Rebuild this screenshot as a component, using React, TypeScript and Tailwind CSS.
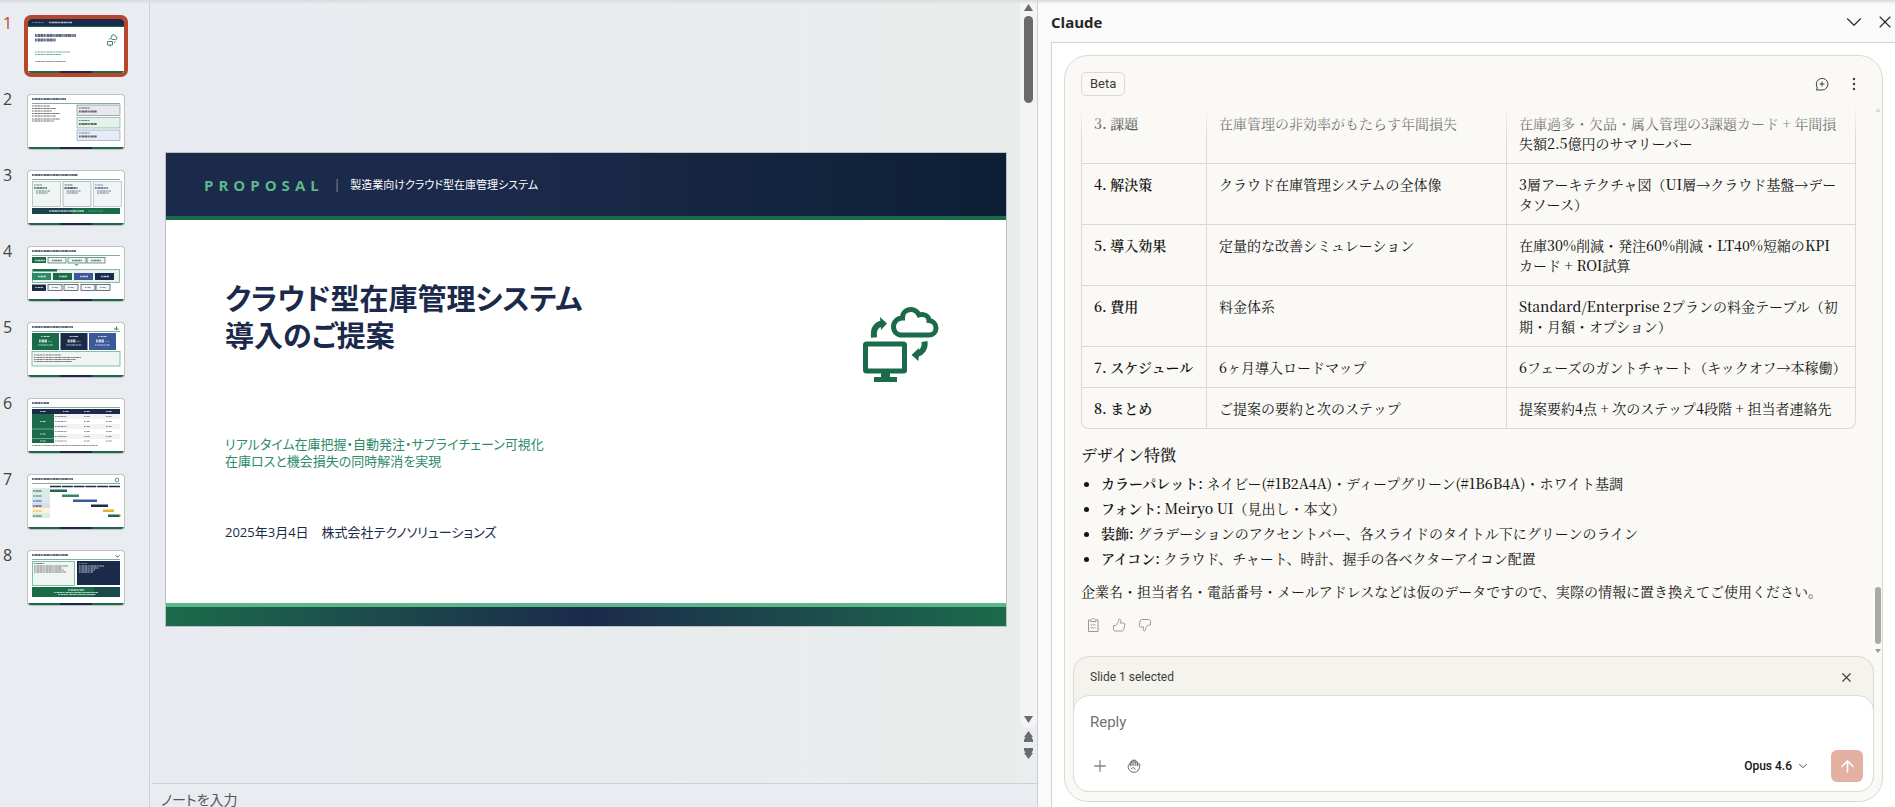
import { useState } from "react";
import type { ReactNode } from "react";
import { ArrowUp, ChevronDown, Plus, X } from "lucide-react";

const NAVY = "#1b2a4a";
const GREEN = "#1b6b4a";
const MINT = "#5cb88a";
const BLUE = "#3b5998";

const rows = [
  {
    name: "3. 課題",
    title: "在庫管理の非効率がもたらす年間損失",
    detail: "在庫過多・欠品・属人管理の3課題カード + 年間損\n失額2.5億円のサマリーバー",
  },
  {
    name: "4. 解決策",
    title: "クラウド在庫管理システムの全体像",
    detail: "3層アーキテクチャ図（UI層→クラウド基盤→デー\nタソース）",
  },
  {
    name: "5. 導入効果",
    title: "定量的な改善シミュレーション",
    detail: "在庫30%削減・発注60%削減・LT40%短縮のKPI\nカード + ROI試算",
  },
  {
    name: "6. 費用",
    title: "料金体系",
    detail: "Standard/Enterprise 2プランの料金テーブル（初\n期・月額・オプション）",
  },
  {
    name: "7. スケジュール",
    title: "6ヶ月導入ロードマップ",
    detail: "6フェーズのガントチャート（キックオフ→本稼働）",
  },
  {
    name: "8. まとめ",
    title: "ご提案の要約と次のステップ",
    detail: "提案要約4点 + 次のステップ4段階 + 担当者連絡先",
  },
];

const features = [
  {
    label: "カラーパレット:",
    text: "ネイビー(#1B2A4A)・ディープグリーン(#1B6B4A)・ホワイト基調",
  },
  { label: "フォント:", text: "Meiryo UI（見出し・本文）" },
  {
    label: "装飾:",
    text: "グラデーションのアクセントバー、各スライドのタイトル下にグリーンのライン",
  },
  {
    label: "アイコン:",
    text: "クラウド、チャート、時計、握手の各ベクターアイコン配置",
  },
];

// Latin runs carry a slightly heavier face than the kana around them.
const Mixed = ({ text }: Readonly<{ text: string }>) => (
  <>
    {text.split(/([!-~]+)/).map((part, index) =>
      index % 2 === 1 ? (
        <span className="font-medium" key={index}>
          {part}
        </span>
      ) : (
        part
      ),
    )}
  </>
);

const Scribble = ({
  x,
  y,
  w,
  color = "#666",
  size = 1,
}: Readonly<{
  x: number;
  y: number;
  w: number;
  color?: string;
  size?: number;
}>) => (
  <path
    d={`M${x} ${y}h${w}`}
    opacity=".7"
    stroke={color}
    strokeDasharray="1.4 .3 .8 .4 2.3 .3 3.1 .5"
    strokeWidth={size}
  />
);

const ThumbBase = ({
  titleWidth,
  children,
}: Readonly<{ titleWidth: number; children: ReactNode }>) => (
  <>
    <Scribble color={NAVY} size={1.8} w={titleWidth} x={4} y={4} />
    <path d="M4 8.5h88" stroke={GREEN} strokeOpacity=".7" strokeWidth=".8" />
    {children}
    <path d="M0 53h96" stroke={GREEN} strokeWidth="2" />
    <path d="M32 53h32" stroke={NAVY} strokeWidth="2" />
  </>
);

const thumbs: ReactNode[] = [
  <>
    <path d="M0 0h96v7H0z" fill={NAVY} />
    <path d="M0 7.5h96" stroke={GREEN} />
    <Scribble color={MINT} w={12} x={4} y={3.5} />
    <Scribble color="#fff" size={1.4} w={23} x={21} y={3.5} />
    <Scribble color={NAVY} size={3} w={41} x={7} y={16.5} />
    <Scribble color={NAVY} size={3} w={21} x={7} y={21} />
    <Scribble color="#2d8b68" w={35} x={7} y={33} />
    <Scribble color="#2d8b68" w={26} x={7} y={35.5} />
    <Scribble w={31} x={7} y={42.5} />
    <path
      d="M79.500 22.500h5v3.500h-5zM82 26v1.500M81 20.500l1.500-1.500M84 20.500h3.500a1.500 1.500 0 0 0 0-3 2 2 0 0 0-4 .5 1.500 1.500 0 0 0 .5 2.500M86 24l1.500-1.500"
      fill="none"
      stroke={GREEN}
      strokeWidth=".8"
    />
    <path d="M0 53h96" stroke={GREEN} strokeWidth="2" />
    <path d="M32 53h32" stroke={NAVY} strokeWidth="2" />
  </>,
  <ThumbBase titleWidth={34}>
    {[11, 13.5, 16, 18.5, 21, 24, 26].map((y, i) => (
      <Scribble color="#333" key={y} w={[18, 24, 20, 28, 24, 28, 22][i]} x={4} y={y} />
    ))}
    {[NAVY, GREEN, BLUE].map((color, i) => (
      <g key={color}>
        <rect
          fill={["#e6e9ee", "#e5f1eb", "#e5ebf7"][i]}
          height="10.5"
          stroke={color}
          strokeOpacity=".6"
          strokeWidth=".6"
          width="43"
          x="49"
          y={10 + i * 12.5}
        />
        <Scribble color={color} w={11} x={51} y={13 + i * 12.5} />
        <Scribble color="#333" size={2} w={18} x={51} y={16.5 + i * 12.5} />
      </g>
    ))}
  </ThumbBase>,
  <ThumbBase titleWidth={46}>
    {[GREEN, NAVY, BLUE].map((color, i) => (
      <g key={color}>
        <rect
          fill="#f0f4f4"
          height="25"
          stroke={color}
          strokeOpacity=".5"
          strokeWidth=".6"
          width="28"
          x={4.5 + i * 30.5}
          y="10.5"
        />
        <Scribble color={color} w={8} x={6 + i * 30.5} y={14} />
        <Scribble color={color} size={2} w={13} x={6 + i * 30.5} y={17} />
        <Scribble color="#444" w={14} x={8 + i * 30.5} y={20} />
        <Scribble color="#444" w={12} x={8 + i * 30.5} y={22} />
      </g>
    ))}
    <path d="M4 37h88v6H4z" fill={GREEN} />
    <path d="M4 37h40v6H4z" fill={NAVY} opacity=".6" />
    <Scribble color="#fff" size={1.5} w={35} x={21} y={40} />
    <Scribble color={MINT} w={15} x={60} y={40} />
  </ThumbBase>,
  <ThumbBase titleWidth={44}>
    <path d="M4 10h14v6H4z" fill={GREEN} />
    {[20, 40, 59].map((x) => (
      <rect
        fill="#f0f4f4"
        height="5.5"
        key={x}
        stroke={GREEN}
        strokeOpacity=".8"
        strokeWidth=".8"
        width="18"
        x={x}
        y="10.5"
      />
    ))}
    {[7, 24, 44, 63].map((x, i) => (
      <Scribble color={i ? "#444" : "#fff"} key={x} size={1.5} w={10} x={x} y={13.5} />
    ))}
    <path d="M46 17h5l-2.5 2z" fill={MINT} />
    <rect
      fill="#e7f2ed"
      height="13"
      stroke={GREEN}
      strokeOpacity=".6"
      strokeWidth=".8"
      width="87"
      x="4.5"
      y="22.5"
    />
    <path d="M5 22h24v2.500H5z" fill={GREEN} />
    {["#2d8b68", GREEN, BLUE, NAVY].map((color, i) => (
      <g key={color}>
        <rect fill={color} height="7" width="19" x={4 + i * 21} y="26" />
        <Scribble color="#fff" size={1.5} w={8} x={10 + i * 21} y={29.5} />
      </g>
    ))}
    <path d="M4 37.500h14v6.500H4z" fill={NAVY} />
    {[20, 36, 53, 68].map((x) => (
      <g key={x}>
        <rect
          fill="#f3f4f6"
          height="6"
          stroke={NAVY}
          strokeOpacity=".8"
          strokeWidth=".8"
          width="14"
          x={x}
          y="37.5"
        />
        <Scribble w={6} x={x + 4} y={40.5} />
      </g>
    ))}
    <Scribble color="#fff" w={8} x={7} y={40.5} />
  </ThumbBase>,
  <ThumbBase titleWidth={41}>
    <path d="M87 7V5M88.500 7V3.500M90 7V5.500" stroke={GREEN} strokeWidth=".9" />
    {[GREEN, NAVY, BLUE].map((color, i) => (
      <g key={color}>
        <rect fill={color} height="17" width="27" x={4 + i * 28.5} y="10" />
        <Scribble color="#fff" w={9} x={13 + i * 28.5} y={13.5} />
        <Scribble color="#fff" size={3} w={8} x={11 + i * 28.5} y={18} />
        <Scribble color={MINT} size={1.5} w={4} x={20 + i * 28.5} y={18.5} />
        <Scribble color="#fff" w={15} x={10 + i * 28.5} y={22} />
      </g>
    ))}
    <rect
      fill="#f0f5f4"
      height="14.5"
      stroke={MINT}
      strokeWidth=".8"
      width="88"
      x="4"
      y="28.5"
    />
    {[32, 34.5, 36.5, 38.5].map((y, i) => (
      <Scribble color="#444" key={y} w={[27, 47, 42, 38][i]} x={6} y={y} />
    ))}
  </ThumbBase>,
  <ThumbBase titleWidth={17}>
    <path d="M4 10h88v5H4z" fill={NAVY} />
    <path d="M4 15h22v29H4z" fill={GREEN} />
    <path d="M26 15h66v5H26zM26 25h66v5H26zM26 35h66v5H26z" fill="#f1f3f4" />
    <path d="M4 30h22M4 39.500h22" stroke="#cde" strokeWidth=".5" />
    {[12, 35, 56, 78].map((x) => (
      <Scribble color="#fff" key={x} w={6} x={x} y={12.5} />
    ))}
    {[17.5, 22.5, 27.5, 32.5, 37.5, 42].map((y) => (
      <g key={y}>
        <Scribble w={12} x={27} y={y} />
        <Scribble w={6} x={56} y={y} />
        <Scribble w={6} x={78} y={y} />
      </g>
    ))}
    <Scribble color="#fff" w={6} x={12} y={22.5} />
    <Scribble color="#fff" w={6} x={12} y={35} />
    <Scribble color="#fff" w={6} x={12} y={42} />
    <Scribble w={66} x={4} y={46.5} />
  </ThumbBase>,
  <ThumbBase titleWidth={41}>
    <circle cx="89" cy="5" fill="none" r="1.8" stroke={GREEN} strokeWidth=".7" />
    <path d="M22 11.500h70" stroke={NAVY} strokeDasharray="11 .8" strokeWidth="1.5" />
    {[
      { bg: "#dcebe4", color: GREEN, x: 22, w: 17 },
      { bg: "#dcebe4", color: "#2d8b68", x: 34, w: 17 },
      { bg: "#dde4f3", color: BLUE, x: 45, w: 24 },
      { bg: "#dcdde3", color: NAVY, x: 63, w: 17 },
      { bg: "#fdf3d8", color: "#e8b22c", x: 75, w: 11 },
      { bg: "#dcebe4", color: GREEN, x: 80, w: 12 },
    ].map((phase, i) => (
      <g key={phase.x}>
        <rect fill={phase.bg} height="5" width="18" x="4" y={13 + i * 5} />
        <Scribble color={phase.color} size={1.5} w={9} x={5} y={16 + i * 5} />
        <rect
          fill={phase.color}
          height="2.5"
          width={phase.w}
          x={phase.x}
          y={14.5 + i * 5}
        />
      </g>
    ))}
    <circle cx="92" cy="40.5" fill="#f5a623" r="1" />
  </ThumbBase>,
  <ThumbBase titleWidth={36}>
    <path d="M87.500 4.500l2 1.500 2-1.500" fill="none" stroke={GREEN} />
    <rect
      fill="#f0f5f4"
      height="24"
      stroke={MINT}
      strokeWidth=".8"
      width="42"
      x="4.5"
      y="10.5"
    />
    <path d="M49 10h43v24H49z" fill={NAVY} />
    {[12.5, 15, 17, 19, 21].map((y, i) => (
      <g key={y}>
        <Scribble color="#444" w={[10, 34, 28, 30, 32][i]} x={6} y={y} />
        <Scribble color={i ? "#fff" : MINT} w={[8, 25, 20, 16, 14][i]} x={51} y={y} />
      </g>
    ))}
    <path d="M4 36h88v10H4z" fill={GREEN} />
    <path d="M66 36h26v10H66z" fill={NAVY} opacity=".5" />
    <Scribble color="#fff" size={1.5} w={16} x={40} y={39} />
    <Scribble color="#fff" w={44} x={26} y={41.5} />
    <Scribble color="#fff" w={38} x={30} y={43.5} />
  </ThumbBase>,
];

const SlideList = () => {
  const [selected, setSelected] = useState(0);

  return (
    <nav
      aria-label="スライド"
      className="flex flex-col gap-[14px] border-r border-[#cdd0d4] pt-[15px] pl-[3px] font-['Open_Sans',sans-serif]"
    >
      {thumbs.map((art, index) => (
        <button
          className="flex items-start text-left"
          key={index}
          onClick={() => setSelected(index)}
          type="button"
        >
          <span
            className={
              index === selected
                ? "w-[21px] text-[16px] leading-4 text-[#c0492b]"
                : "w-[21px] text-[16px] leading-4 text-[#444]"
            }
          >
            {index + 1}
          </span>
          <span
            className={
              index === selected
                ? "rounded-[7px] border-4 border-[#b7472a] bg-white"
                : "rounded-[7px] border-4 border-transparent"
            }
          >
            <svg
              className={
                index === selected
                  ? "h-[54px] w-[96px] rounded-[3px] bg-white"
                  : "h-[54px] w-[96px] rounded-[3px] bg-white shadow-[0_0_0_1px_#c2c0c0]"
              }
              viewBox="0 0 96 54"
            >
              {art}
            </svg>
          </span>
        </button>
      ))}
    </nav>
  );
};

const CloudSync = () => (
  <svg
    className="h-[76px] w-[76px]"
    fill="none"
    stroke={GREEN}
    strokeWidth="5"
    viewBox="0 0 76 76"
  >
    <rect height="27" rx="1" width="39" x="2.5" y="37" />
    <path d="M22.500 64v7" strokeWidth="9" />
    <path d="M11 72.500h23" />
    <path d="M11 30.500C10 22.500 13 17.500 19 16.500" strokeWidth="6" />
    <path d="M17 10l7 6.500-6 6.500z" fill={GREEN} stroke="none" />
    <path d="M61.500 34.500c1 7-3 11.500-8 13" strokeWidth="6" />
    <path d="M56 41l-7.500 7 7 6z" fill={GREEN} stroke="none" />
    <path d="M39 28h27c4 0 7-3 7-7 0-4-3-7-7-7.500 0-4-4.500-7.500-10-5.500C54 4 51 2.500 48 2.500c-5 0-8.500 3.500-8.500 8.500-5 0-9 4-9 8.500 0 5 3.500 8.500 8.500 8.500z" />
  </svg>
);

const Slide = () => (
  <section className="flex aspect-[842/475] w-full flex-col border border-[#c0c0c4] bg-white font-['Open_Sans','Noto_Sans_CJK_JP',sans-serif] [font-feature-settings:'palt']">
    <div className="flex h-[67px] shrink-0 items-center border-b-4 border-[#1b6b4a] bg-linear-to-r from-[#1b2a4a] from-40% to-[#0d1f35] pl-[38px] leading-5">
      <span className="text-[15px] font-bold tracking-[5px] text-[#5cb88a]">
        PROPOSAL
      </span>
      <span className="mx-[10px] text-[12px] text-[#8d95a5]">|</span>
      <span className="text-[11px] text-white">
        製造業向けクラウド型在庫管理システム
      </span>
    </div>
    <div className="flex min-h-0 flex-1 justify-between pr-[67px] pl-[59px]">
      <div className="text-[13px] text-[#1b2a4a]">
        <h1 className="pt-[60px] text-[29px] leading-[37px] font-bold">
          クラウド型在庫管理システム
          <br />
          導入のご提案
        </h1>
        <p className="pt-[82px] leading-[17px] text-[#2d8b68]">
          リアルタイム在庫把握・自動発注・サプライチェーン可視化
          <br />
          在庫ロスと機会損失の同時解消を実現
        </p>
        <p className="pt-[52px] leading-5">
          2025年3月4日　株式会社テクノソリューションズ
        </p>
      </div>
      <div className="pt-[87px]">
        <CloudSync />
      </div>
    </div>
    <div className="h-[23px] shrink-0 border-t-4 border-[#5cb88a] bg-linear-to-r from-[#1b6b4a] via-[#1b2a4a] to-[#1b6b4a]" />
  </section>
);

const DeckScrollbar = () => (
  <div className="flex w-[17px] shrink-0 flex-col items-center">
    <div className="flex h-[728px] w-full flex-col items-center rounded-b-lg bg-[#f4f4f4] pt-1">
      <svg className="h-[8px] w-[9px]" fill="#6b6b6b" viewBox="0 0 9 8">
        <path d="M4.500 0L9 7H0z" />
      </svg>
      <div className="mt-1 h-[87px] w-[9px] rounded-full bg-[#6b6b6b]" />
      <svg className="mt-auto mb-1 h-[8px] w-[9px]" fill="#6b6b6b" viewBox="0 0 9 8">
        <path d="M0 0h9L4.500 7z" />
      </svg>
    </div>
    <svg className="mt-[3px] h-[28px] w-[9px]" fill="#6b6b6b" viewBox="0 0 9 28">
      <path d="M4.500 0L9 6H7.500L9 9v2H0V9l1.500-3H0zM0 17h9v2l-1.500 3H9l-4.500 6L0 22h1.500L0 19z" />
    </svg>
  </div>
);

const Deck = () => (
  <main className="flex min-h-0 min-w-0 flex-col">
    <div className="flex min-h-0 flex-1">
      <div className="flex min-w-0 flex-1 items-center bg-linear-to-r from-[#e8ebf1] via-[#e9eced] to-[#e8edec] pr-[13px] pb-1 pl-[15px]">
        <Slide />
      </div>
      <DeckScrollbar />
    </div>
    <div className="ml-[2px] h-6 shrink-0 overflow-hidden border-t border-[#cdd0d4] pt-[6px] pl-[9px] text-[14px] leading-5 text-[#555] [font-feature-settings:'palt']">
      ノートを入力
    </div>
  </main>
);

const ResultTable = () => (
  <table className="w-full shrink-0 table-fixed border-separate border-spacing-0 text-[14px] leading-5">
    <colgroup>
      <col className="w-[126px]" />
      <col className="w-[300px]" />
      <col />
    </colgroup>
    <tbody>
      {rows.map((row, index) => {
        const last = index === rows.length - 1;
        return (
          <tr className="align-top" key={row.name}>
            <th
              className={
                last
                  ? "rounded-bl-lg border-x border-b border-[#dad9d5] px-3 py-[10px] text-left font-semibold"
                  : "border-x border-b border-[#dad9d5] px-3 py-[10px] text-left font-semibold"
              }
              scope="row"
            >
              {row.name}
            </th>
            <td className="border-r border-b border-[#dad9d5] px-3 py-[10px]">
              <Mixed text={row.title} />
            </td>
            <td
              className={
                last
                  ? "rounded-br-lg border-r border-b border-[#dad9d5] px-3 py-[10px] whitespace-pre"
                  : "border-r border-b border-[#dad9d5] px-3 py-[10px] whitespace-pre"
              }
            >
              <Mixed text={row.detail} />
            </td>
          </tr>
        );
      })}
    </tbody>
  </table>
);

const ReplyActions = () => (
  <div className="mt-[13px] flex gap-[10px] pl-1 text-[#9b9a95]">
    <button aria-label="Copy" type="button">
      <svg className="size-4" fill="none" stroke="currentColor" viewBox="0 0 16 16">
        <path d="M5.500 3H3.500v11.500h9.500V3h-2M5.500 4.500V3c1 0 1-1.500 2.700-1.500S10 3 11 3v1.500zM5.500 7.500l1 .7 1-.7 1 .7 1-.7 1 .7M5.500 10.500l1 .7 1-.7 1 .7 1-.7 1 .7" />
      </svg>
    </button>
    <button aria-label="Good response" type="button">
      <svg
        className="size-4"
        fill="none"
        stroke="currentColor"
        strokeLinejoin="round"
        viewBox="0 0 16 16"
      >
        <path d="M2.500 8.500h2.200L7 5.500c.5-1 .3-3.500 1.300-3.500 1.700 0 1.700 2 1 4h3.200c1.200 0 1.500 1 1.200 2l-1 4.500c-.3 1-1 1.500-2 1.500H4.500c-1.500 0-2-.7-2-2z" />
      </svg>
    </button>
    <button aria-label="Bad response" type="button">
      <svg
        className="size-4"
        fill="none"
        stroke="currentColor"
        strokeLinejoin="round"
        viewBox="0 0 16 16"
      >
        <path d="M13.500 8h-2.200L9 10.500c-.5 1-.3 3.500-1.300 3.500-1.700 0-1.700-2-1-4H3.500c-1.200 0-1.500-1-1.200-2l.8-4c.3-1 .8-1.500 2-1.500h6.400c1.500 0 2 .7 2 2z" />
      </svg>
    </button>
  </div>
);

const Conversation = () => (
  <div className="relative flex min-h-0 flex-1 flex-col justify-end overflow-hidden pr-[26px] pb-[23px] pl-4 font-['Noto_Serif_CJK_JP','Liberation_Serif','Noto_Sans_CJK_JP',serif] text-[14px] text-[#141413]">
    <ResultTable />
    <h2 className="mt-[14px] text-[16px] leading-6 font-medium">デザイン特徴</h2>
    <ul className="mt-1 list-disc pl-5 leading-[25px]">
      {features.map((feature) => (
        <li key={feature.label}>
          <strong className="font-semibold">{feature.label}</strong>{" "}
          <Mixed text={feature.text} />
        </li>
      ))}
    </ul>
    <p className="mt-2 leading-[25px]">
      企業名・担当者名・電話番号・メールアドレスなどは仮のデータですので、実際の情報に置き換えてご使用ください。
    </p>
    <ReplyActions />
    <div className="absolute inset-x-0 top-0 h-10 bg-linear-to-b from-[#faf9f5] from-10% to-transparent" />
    <div className="absolute top-2 right-px flex h-[545px] w-[7px] flex-col items-center">
      <svg className="h-[4px] w-[6px]" fill="#dddcd8" viewBox="0 0 6 4">
        <path d="M3 0l3 4H0z" />
      </svg>
      <div className="mt-auto h-[57px] w-[6px] shrink-0 rounded-full bg-[#aaa9a6]" />
      <svg className="mt-[5px] h-[4px] w-[6px] shrink-0" fill="#9b9a97" viewBox="0 0 6 4">
        <path d="M0 0h6L3 4z" />
      </svg>
    </div>
  </div>
);

const Composer = () => {
  const [reply, setReply] = useState("");
  const [contextShown, setContextShown] = useState(true);

  return (
    <div className="px-2 pb-[9px]">
      <div className="rounded-[16px] border border-[#dad9d4] bg-[#f4f3ee]">
        {contextShown ? (
          <div className="flex h-[38px] items-center justify-between pt-[2px] pr-[19px] pl-4 text-[12px] text-[#3d3d3a]">
            <span>Slide 1 selected</span>
            <button
              aria-label="Clear selection"
              onClick={() => setContextShown(false)}
              type="button"
            >
              <X size={15} strokeWidth={1.8} />
            </button>
          </div>
        ) : null}
        <div className="-mx-px -mb-px rounded-[16px] border border-[#dddcd8] bg-white px-[10px] pt-[15px] pb-[9px]">
          <textarea
            aria-label="Reply"
            className="block h-[22px] w-full resize-none px-[6px] text-[15px] leading-[22px] outline-none placeholder:text-[#73726c]"
            onChange={(event) => setReply(event.target.value)}
            placeholder="Reply"
            value={reply}
          />
          <div className="mt-[17px] flex items-center">
            <button
              aria-label="Add"
              className="flex size-8 items-center justify-center text-[#87867f]"
              type="button"
            >
              <Plus size={18} strokeWidth={1.7} />
            </button>
            <button
              aria-label="Permissions"
              className="ml-[2px] flex size-8 items-center justify-center text-[#3d3d3a]"
              type="button"
            >
              <svg
                className="size-[14px]"
                fill="none"
                stroke="currentColor"
                strokeLinecap="round"
                strokeWidth=".8"
                viewBox="0 0 14 14"
              >
                <path d="M3.300 7V3.500c0-1.400 1.700-1.400 1.700 0V6.500M5 3.500V2c0-1.400 1.900-1.400 1.900 0V6.500M6.900 2c0-1.400 1.900-1.400 1.900 0V6.500M8.800 3.500c0-1.400 1.800-1.400 1.800 0V7M10.600 5.500c.2-1.300 2.200-1.200 2.200.3 0 4-1.800 7.500-5.600 7.500-3.700 0-6-2.500-6-6 0-1.500.8-2.500 2.100-2.500M4.500 9.500c1.200-1.200 3-1.200 3.700.5" />
              </svg>
            </button>
            <button
              className="mr-[21px] ml-auto flex items-center gap-1 text-[12px] font-medium text-[#141413]"
              type="button"
            >
              Opus 4.6
              <ChevronDown size={14} strokeWidth={1.3} />
            </button>
            <button
              aria-label="Send"
              className="flex size-8 items-center justify-center rounded-md bg-[#e2b1a1] text-white"
              type="submit"
            >
              <ArrowUp size={19} strokeWidth={2} />
            </button>
          </div>
        </div>
      </div>
    </div>
  );
};

const ClaudePane = () => (
  <aside className="flex min-h-0 min-w-0 flex-col border-l border-[#cfcfcf] bg-[#fafafa]">
    <header className="flex h-[42px] shrink-0 items-center pt-[2px] pl-[13px] text-[#252525]">
      <h2 className="font-['Open_Sans',sans-serif] text-[15px] font-bold">Claude</h2>
      <button aria-label="Collapse pane" className="ml-auto" type="button">
        <ChevronDown size={26} strokeWidth={1} />
      </button>
      <button aria-label="Close pane" className="ml-2" type="button">
        <X size={20} strokeWidth={1.3} />
      </button>
    </header>
    <div className="ml-[13px] flex min-h-0 flex-1 flex-col border-t border-l border-[#d2d2d2] bg-white pt-3 pr-3 pb-[5px] pl-3">
      <div className="flex min-h-0 flex-1 flex-col rounded-[24px] border border-[#dad9d4] bg-[#faf9f5]">
        <div className="flex h-11 shrink-0 items-end px-4 pb-1">
          <span className="flex h-6 items-center rounded-[5px] border border-[#dad9d4] px-2 text-[13px] text-[#3d3d3a]">
            Beta
          </span>
          <button
            aria-label="New chat"
            className="mb-1 ml-auto text-[#3d3d3a]"
            type="button"
          >
            <svg className="size-4" fill="none" stroke="currentColor" viewBox="0 0 16 16">
              <path d="M2.500 14h5.700a5.800 5.800 0 1 0-5.500-3.800L3.300 12zM5.500 8h5M8 5.500v5" />
            </svg>
          </button>
          <button
            aria-label="More"
            className="mr-1 mb-1 ml-4 text-[#3d3d3a]"
            type="button"
          >
            <svg className="size-4" fill="currentColor" viewBox="0 0 16 16">
              <circle cx="8" cy="3" r="1.2" />
              <circle cx="8" cy="8" r="1.2" />
              <circle cx="8" cy="13" r="1.2" />
            </svg>
          </button>
        </div>
        <Conversation />
        <Composer />
      </div>
    </div>
  </aside>
);

export default function App() {
  return (
    <div className="relative grid h-screen grid-cols-[150px_887fr_858fr] grid-rows-[minmax(0,1fr)] overflow-hidden bg-[#e9ecf1] font-['Roboto','Noto_Sans_CJK_JP',sans-serif]">
      <SlideList />
      <Deck />
      <ClaudePane />
      <div className="pointer-events-none absolute inset-x-0 top-0 h-1 bg-linear-to-b from-[#d9dadd] to-transparent" />
    </div>
  );
}
